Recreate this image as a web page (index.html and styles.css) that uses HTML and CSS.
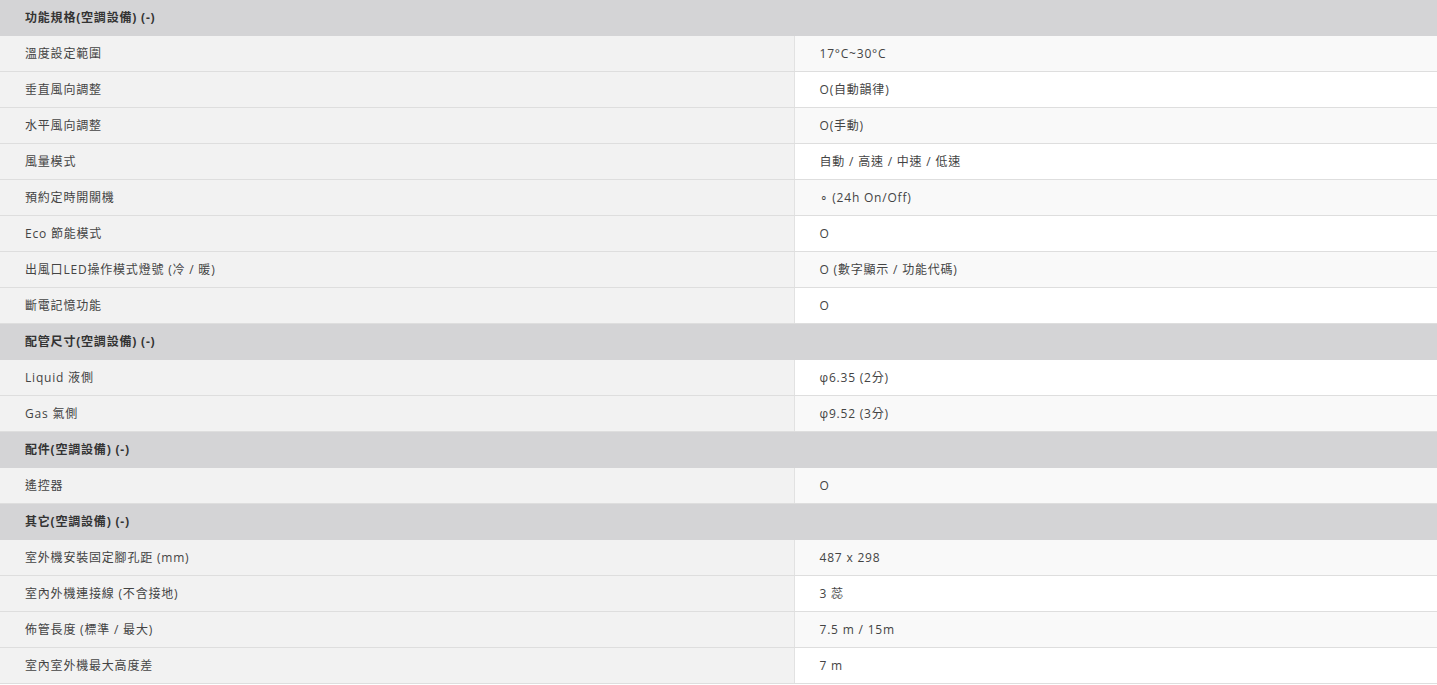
FILE: index.html
```html
<!DOCTYPE html>
<html lang="zh-Hant">
<head>
<meta charset="utf-8">
<title>規格</title>
<link rel="stylesheet" href="styles.css">
</head>
<body>
<table class="spec">
  <colgroup>
    <col class="col-label">
    <col class="col-value">
  </colgroup>
  <tbody>
    <tr class="group"><th colspan="2">功能規格(空調設備) (-)</th></tr>
    <tr><td class="label">溫度設定範圍</td><td class="value">17°C~30°C</td></tr>
    <tr><td class="label">垂直風向調整</td><td class="value">O(自動韻律)</td></tr>
    <tr><td class="label">水平風向調整</td><td class="value">O(手動)</td></tr>
    <tr><td class="label">風量模式</td><td class="value">自動 / 高速 / 中速 / 低速</td></tr>
    <tr><td class="label">預約定時開關機</td><td class="value">∘ (24h On/Off)</td></tr>
    <tr><td class="label">Eco 節能模式</td><td class="value">O</td></tr>
    <tr><td class="label">出風口LED操作模式燈號 (冷 / 暖)</td><td class="value">O (數字顯示 / 功能代碼)</td></tr>
    <tr><td class="label">斷電記憶功能</td><td class="value">O</td></tr>
    <tr class="group"><th colspan="2">配管尺寸(空調設備) (-)</th></tr>
    <tr><td class="label">Liquid 液側</td><td class="value">φ6.35 (2分)</td></tr>
    <tr><td class="label">Gas 氣側</td><td class="value">φ9.52 (3分)</td></tr>
    <tr class="group"><th colspan="2">配件(空調設備) (-)</th></tr>
    <tr><td class="label">遙控器</td><td class="value">O</td></tr>
    <tr class="group"><th colspan="2">其它(空調設備) (-)</th></tr>
    <tr><td class="label">室外機安裝固定腳孔距 (mm)</td><td class="value">487 x 298</td></tr>
    <tr><td class="label">室內外機連接線 (不含接地)</td><td class="value">3 蕊</td></tr>
    <tr><td class="label">佈管長度 (標準 / 最大)</td><td class="value">7.5 m / 15m</td></tr>
    <tr><td class="label">室內室外機最大高度差</td><td class="value">7 m</td></tr>
  </tbody>
</table>
</body>
</html>
```
FILE: styles.css
```css
html, body {
  margin: 0;
  padding: 0;
  background: #ffffff;
}
body {
  font-family: "Open Sans", "Noto Sans CJK TC", sans-serif;
  font-size: 12px;
  color: #444444;
}
.spec {
  width: 100%;
  border-collapse: collapse;
  table-layout: fixed;
}
.col-label {
  width: 794px;
}
.spec tr {
  height: 36px;
}
.spec tr:first-child {
  height: 35px;
}
.spec th,
.spec td {
  padding: 0 0 0 25px;
  border-bottom: 1px solid #dedede;
  text-align: left;
  vertical-align: middle;
  letter-spacing: 0.8px;
  white-space: nowrap;
}
.group th {
  background: #d4d4d6;
  font-weight: bold;
  color: #333333;
  border-bottom: 1px solid #d4d4d6;
}
.label {
  background: #f2f2f2;
  border-right: 1px solid #e2e2e2;
}
.value {
  background: #ffffff;
}
.spec tr:nth-child(even) .value {
  background: #f9f9f9;
}
```
